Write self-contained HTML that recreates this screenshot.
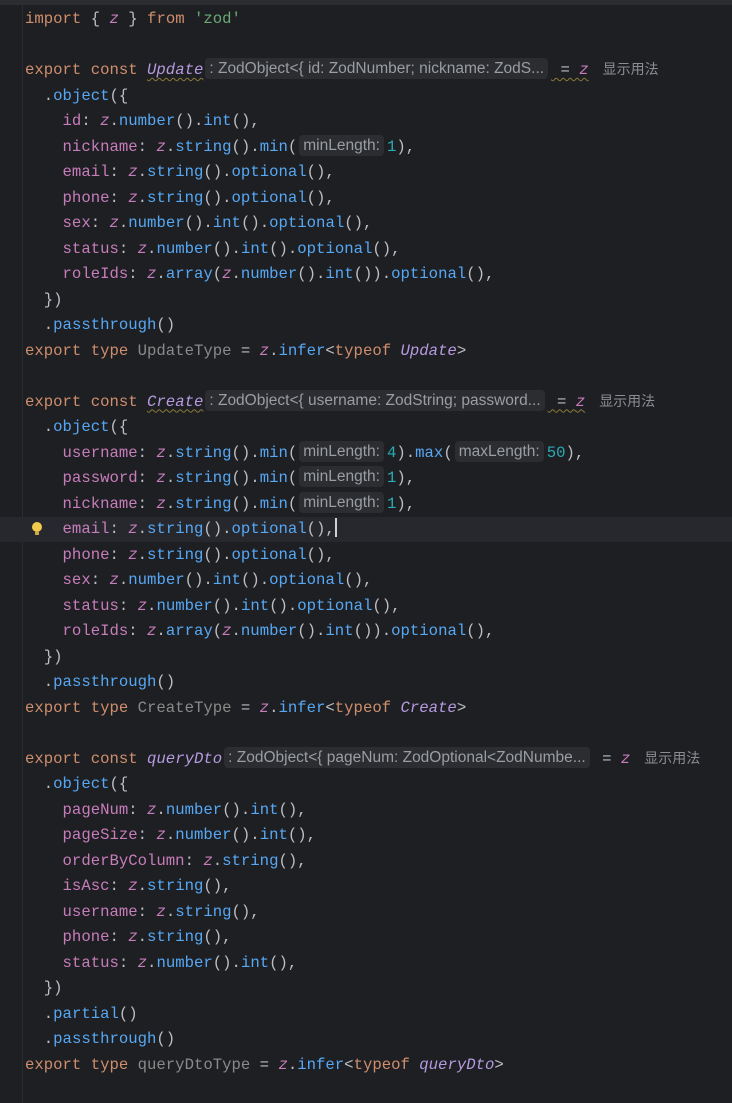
<!DOCTYPE html>
<html><head><meta charset="utf-8"><style>
body{margin:0;background:#1e1f22;width:732px;height:1103px;overflow:hidden;position:relative}
.top{position:absolute;left:0;top:0;width:732px;height:5px;background:#2b2d30}
.gut{position:absolute;left:22px;top:5px;width:1px;height:1098px;background:#2b2d30}
.cur{position:absolute;left:0;top:517px;width:732px;height:25px;background:#26282e}
.code{position:absolute;left:25px;top:7px;font:15.65px/25.5px "Liberation Mono",monospace;color:#bcbec4;white-space:pre}
.k{color:#cf8e6d}.p{color:#c77dbb}.m{color:#56a8f5}.s{color:#6aab73}.n{color:#2aacb8}
.z{color:#c77dbb;font-style:italic}.v{color:#b59ae0;font-style:italic}.g{color:#8a8a8a}
.h{display:inline-block;font:15.5px/21px "Liberation Sans",sans-serif;color:#9a9da3;background:#2b2d30;border-radius:4px;padding:0 4px;margin:0 3px 0 2px;vertical-align:1px}
.u{text-decoration:underline wavy #8a7a3a;text-decoration-thickness:1px;text-underline-offset:3px}
.cn{font:14px "Liberation Sans","Noto Sans CJK SC",sans-serif;color:#8a8d93;margin-left:14px}
.bulb{position:absolute;left:32px;top:522px;width:10px;height:10px;border-radius:50%;background:#f2c94c}
.bulb:after{content:"";position:absolute;left:3px;top:10px;width:4px;height:3px;background:#c9a94a}
.caret{display:inline-block;width:2px;height:19px;background:#ced0d6;vertical-align:-4px}
</style></head><body>
<div class="top"></div><div class="gut"></div><div class="cur"></div><div class="bulb"></div>
<div class="code"><span class="k">import</span> { <span class="z">z</span> } <span class="k">from</span> <span class="s">'zod'</span>

<span class="k">export const</span> <span class="v u">Update</span><span class="h">: ZodObject&lt;{ id: ZodNumber; nickname: ZodS...</span><span class="u"> = <span class="z">z</span></span><span class="cn">显示用法</span>
  .<span class="m">object</span>({
    <span class="p">id</span>: <span class="z">z</span>.<span class="m">number</span>().<span class="m">int</span>(),
    <span class="p">nickname</span>: <span class="z">z</span>.<span class="m">string</span>().<span class="m">min</span>(<span class="h">minLength:</span><span class="n">1</span>),
    <span class="p">email</span>: <span class="z">z</span>.<span class="m">string</span>().<span class="m">optional</span>(),
    <span class="p">phone</span>: <span class="z">z</span>.<span class="m">string</span>().<span class="m">optional</span>(),
    <span class="p">sex</span>: <span class="z">z</span>.<span class="m">number</span>().<span class="m">int</span>().<span class="m">optional</span>(),
    <span class="p">status</span>: <span class="z">z</span>.<span class="m">number</span>().<span class="m">int</span>().<span class="m">optional</span>(),
    <span class="p">roleIds</span>: <span class="z">z</span>.<span class="m">array</span>(<span class="z">z</span>.<span class="m">number</span>().<span class="m">int</span>()).<span class="m">optional</span>(),
  })
  .<span class="m">passthrough</span>()
<span class="k">export type</span> <span class="g">UpdateType</span> = <span class="z">z</span>.<span class="m">infer</span>&lt;<span class="k">typeof</span> <span class="v">Update</span>&gt;

<span class="k">export const</span> <span class="v u">Create</span><span class="h">: ZodObject&lt;{ username: ZodString; password...</span><span class="u"> = <span class="z">z</span></span><span class="cn">显示用法</span>
  .<span class="m">object</span>({
    <span class="p">username</span>: <span class="z">z</span>.<span class="m">string</span>().<span class="m">min</span>(<span class="h">minLength:</span><span class="n">4</span>).<span class="m">max</span>(<span class="h">maxLength:</span><span class="n">50</span>),
    <span class="p">password</span>: <span class="z">z</span>.<span class="m">string</span>().<span class="m">min</span>(<span class="h">minLength:</span><span class="n">1</span>),
    <span class="p">nickname</span>: <span class="z">z</span>.<span class="m">string</span>().<span class="m">min</span>(<span class="h">minLength:</span><span class="n">1</span>),
    <span class="p">email</span>: <span class="z">z</span>.<span class="m">string</span>().<span class="m">optional</span>(),<span class="caret"></span>
    <span class="p">phone</span>: <span class="z">z</span>.<span class="m">string</span>().<span class="m">optional</span>(),
    <span class="p">sex</span>: <span class="z">z</span>.<span class="m">number</span>().<span class="m">int</span>().<span class="m">optional</span>(),
    <span class="p">status</span>: <span class="z">z</span>.<span class="m">number</span>().<span class="m">int</span>().<span class="m">optional</span>(),
    <span class="p">roleIds</span>: <span class="z">z</span>.<span class="m">array</span>(<span class="z">z</span>.<span class="m">number</span>().<span class="m">int</span>()).<span class="m">optional</span>(),
  })
  .<span class="m">passthrough</span>()
<span class="k">export type</span> <span class="g">CreateType</span> = <span class="z">z</span>.<span class="m">infer</span>&lt;<span class="k">typeof</span> <span class="v">Create</span>&gt;

<span class="k">export const</span> <span class="v">queryDto</span><span class="h">: ZodObject&lt;{ pageNum: ZodOptional&lt;ZodNumbe...</span> = <span class="z">z</span><span class="cn">显示用法</span>
  .<span class="m">object</span>({
    <span class="p">pageNum</span>: <span class="z">z</span>.<span class="m">number</span>().<span class="m">int</span>(),
    <span class="p">pageSize</span>: <span class="z">z</span>.<span class="m">number</span>().<span class="m">int</span>(),
    <span class="p">orderByColumn</span>: <span class="z">z</span>.<span class="m">string</span>(),
    <span class="p">isAsc</span>: <span class="z">z</span>.<span class="m">string</span>(),
    <span class="p">username</span>: <span class="z">z</span>.<span class="m">string</span>(),
    <span class="p">phone</span>: <span class="z">z</span>.<span class="m">string</span>(),
    <span class="p">status</span>: <span class="z">z</span>.<span class="m">number</span>().<span class="m">int</span>(),
  })
  .<span class="m">partial</span>()
  .<span class="m">passthrough</span>()
<span class="k">export type</span> <span class="g">queryDtoType</span> = <span class="z">z</span>.<span class="m">infer</span>&lt;<span class="k">typeof</span> <span class="v">queryDto</span>&gt;</div>
</body></html>
